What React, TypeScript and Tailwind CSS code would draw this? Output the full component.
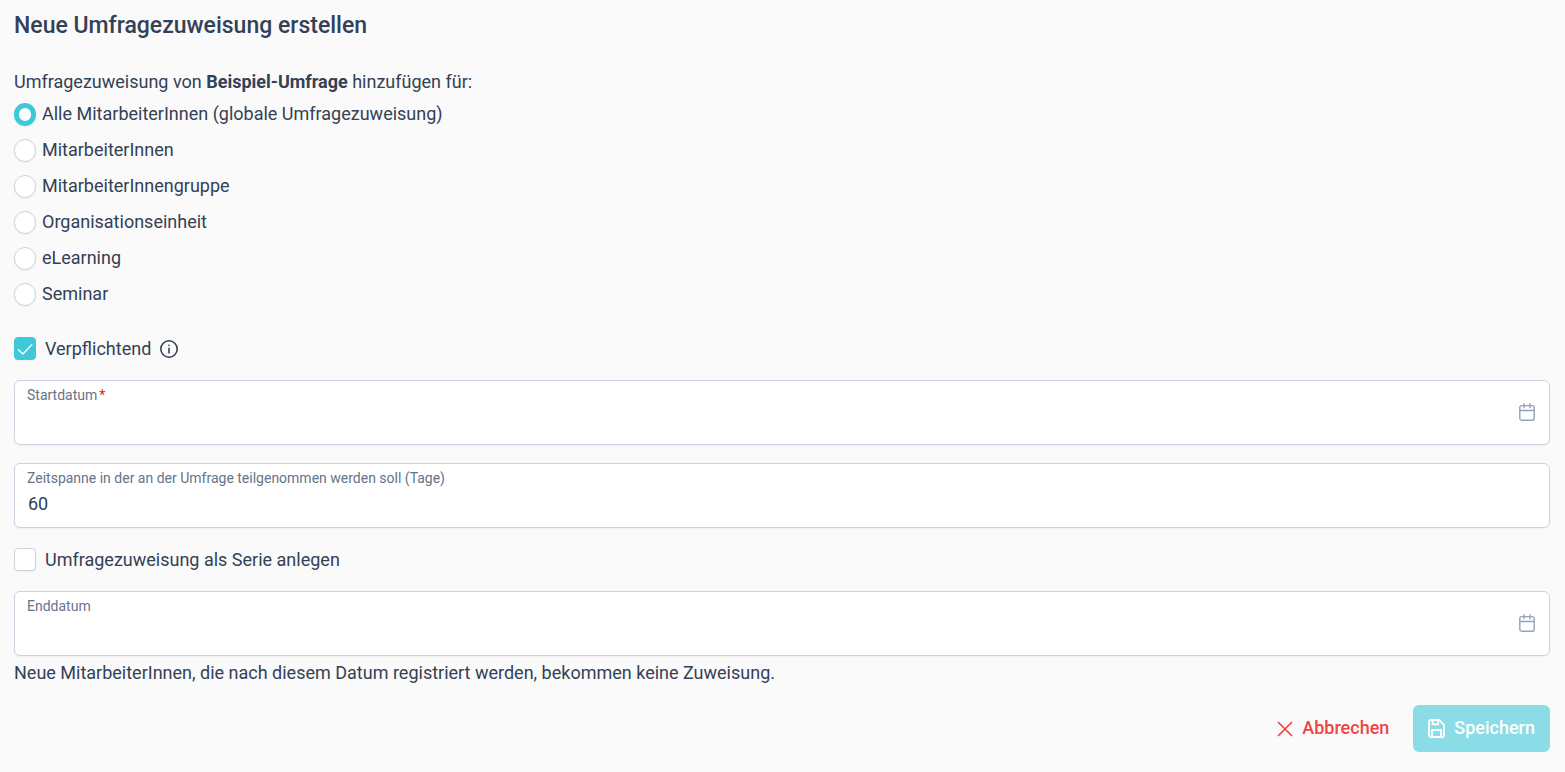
import React, { useState } from 'react';

const targets = [
  { id: 'all', label: 'Alle MitarbeiterInnen (globale Umfragezuweisung)' },
  { id: 'employees', label: 'MitarbeiterInnen' },
  { id: 'group', label: 'MitarbeiterInnengruppe' },
  { id: 'unit', label: 'Organisationseinheit' },
  { id: 'elearning', label: 'eLearning' },
  { id: 'seminar', label: 'Seminar' },
];

function CalendarIcon() {
  return (
    <svg className="h-[18px] w-4" viewBox="0 0 16 18" fill="none" stroke="currentColor" strokeWidth="1.4" strokeLinecap="round" aria-hidden="true">
      <rect x="0.8" y="2.6" width="14.4" height="14.6" rx="2" />
      <path d="M1 7.5h14M5 0.7v4M11 0.7v4" />
    </svg>
  );
}

function InfoIcon() {
  return (
    <svg className="h-[18px] w-[18px]" viewBox="0 0 18 18" fill="none" stroke="currentColor" strokeWidth="1.6" strokeLinecap="round" aria-hidden="true">
      <circle cx="9" cy="9" r="8.2" />
      <path d="M9 8.2v4.8M9 5.2v0.2" />
    </svg>
  );
}

function CloseIcon() {
  return (
    <svg className="h-4 w-4" viewBox="0 0 16 16" fill="none" stroke="currentColor" strokeWidth="1.7" strokeLinecap="round" aria-hidden="true">
      <path d="M1.5 1.5l13 13M14.5 1.5l-13 13" />
    </svg>
  );
}

function SaveIcon() {
  return (
    <svg className="h-[19px] w-[17px]" viewBox="0 0 17 19" fill="none" stroke="currentColor" strokeWidth="1.8" strokeLinejoin="round" aria-hidden="true">
      <path d="M3 1h8.4L16 5.8V16a2 2 0 0 1-2 2H3a2 2 0 0 1-2-2V3a2 2 0 0 1 2-2z" />
      <path d="M4.6 1.2v4.2h5.6V1.2M4 18v-7h9v7" />
    </svg>
  );
}

type CheckboxProps = {
  id: string;
  label: string;
  checked: boolean;
  onChange: (checked: boolean) => void;
  children?: React.ReactNode;
};

function Checkbox({ id, label, checked, onChange, children }: CheckboxProps) {
  return (
    <div className="flex h-[23px] items-center">
      <span className="grid h-[23px] w-[22px] shrink-0 place-items-center">
        <input
          id={id}
          type="checkbox"
          checked={checked}
          onChange={(e) => onChange(e.target.checked)}
          className="col-start-1 row-start-1 h-[23px] w-[22px] appearance-none rounded-[4px] border border-[#cbd5e1] bg-white shadow-xs checked:border-[#3ec9d9] checked:bg-[#3ec9d9]"
        />
        {checked && (
          <svg className="pointer-events-none col-start-1 row-start-1 h-4 w-4 text-white" viewBox="0 0 16 16" fill="none" stroke="currentColor" strokeWidth="1.4" strokeLinecap="round" strokeLinejoin="round" aria-hidden="true">
            <path d="M1.4 8.8l4.5 4.3L14.8 3.8" />
          </svg>
        )}
      </span>
      <label htmlFor={id} className="ml-[9px]">{label}</label>
      {children}
    </div>
  );
}

type FieldProps = {
  id: string;
  label: string;
  value: string;
  onChange: (value: string) => void;
  required?: boolean;
  calendar?: boolean;
};

function Field({ id, label, value, onChange, required, calendar }: FieldProps) {
  return (
    <div className="flex h-[65px] items-center rounded-md border border-[#cbd5e1] bg-white pr-[14px] shadow-xs">
      <div className="flex h-full grow flex-col pt-1">
        <label htmlFor={id} className="pl-3 text-sm leading-5 text-[#64748b]">
          {label}
          {required && <span className="ml-0.5 text-[#dc2626]">*</span>}
        </label>
        <input
          id={id}
          type="text"
          value={value}
          required={required}
          onChange={(e) => onChange(e.target.value)}
          className="h-[30px] w-full bg-transparent pl-[13px] outline-none"
        />
      </div>
      {calendar && (
        <button type="button" aria-label={label} className="pb-0.5 text-[#94a3b8]">
          <CalendarIcon />
        </button>
      )}
    </div>
  );
}

export default function App() {
  const [target, setTarget] = useState('all');
  const [mandatory, setMandatory] = useState(true);
  const [series, setSeries] = useState(false);
  const [start, setStart] = useState('');
  const [days, setDays] = useState('60');
  const [end, setEnd] = useState('');

  return (
    <main className="min-h-screen bg-[#fafafa] pt-2 pr-[15px] pb-5 pl-[14px] font-['Roboto',sans-serif] text-lg leading-7 text-[#334155]">
      <h1 className="text-[23px] leading-9 font-medium">Neue Umfragezuweisung erstellen</h1>

      <form onSubmit={(e) => e.preventDefault()}>
        <fieldset className="mt-6">
          <legend>
            Umfragezuweisung von <strong className="font-bold">Beispiel-Umfrage</strong> hinzufügen für:
          </legend>
          {targets.map((t) => (
            <div key={t.id} className="flex h-9 items-center gap-1.5">
              <input
                id={t.id}
                type="radio"
                name="target"
                checked={target === t.id}
                onChange={() => setTarget(t.id)}
                className="h-[23px] w-[22px] shrink-0 appearance-none rounded-full border border-[#cbd5e1] bg-white shadow-xs checked:border-5 checked:border-[#3ec9d9]"
              />
              <label htmlFor={t.id}>{t.label}</label>
            </div>
          ))}
        </fieldset>

        <div className="mt-[25px]">
          <Checkbox id="mandatory" label="Verpflichtend" checked={mandatory} onChange={setMandatory}>
            <button type="button" aria-label="Information" className="ml-[9px]">
              <InfoIcon />
            </button>
          </Checkbox>
        </div>

        <div className="mt-5 flex flex-col gap-[18px]">
          <Field id="start" label="Startdatum" value={start} onChange={setStart} required calendar />
          <Field id="days" label="Zeitspanne in der an der Umfrage teilgenommen werden soll (Tage)" value={days} onChange={setDays} />
        </div>

        <div className="mt-5">
          <Checkbox id="series" label="Umfragezuweisung als Serie anlegen" checked={series} onChange={setSeries} />
        </div>

        <div className="mt-5">
          <Field id="end" label="Enddatum" value={end} onChange={setEnd} calendar />
        </div>
        <p className="mt-[3px]">
          Neue MitarbeiterInnen, die nach diesem Datum registriert werden, bekommen keine Zuweisung.
        </p>

        <div className="mt-[18px] flex justify-end gap-2">
          <button type="button" className="flex h-[47px] items-center gap-[9px] rounded-md px-4 font-medium text-[#ef4444]">
            <CloseIcon />
            <span className="pb-0.5">Abbrechen</span>
          </button>
          <button type="submit" disabled className="flex h-[47px] items-center gap-[9px] rounded-md bg-[#8adde6] px-[15px] font-medium text-white">
            <SaveIcon />
            <span className="pb-0.5">Speichern</span>
          </button>
        </div>
      </form>
    </main>
  );
}
